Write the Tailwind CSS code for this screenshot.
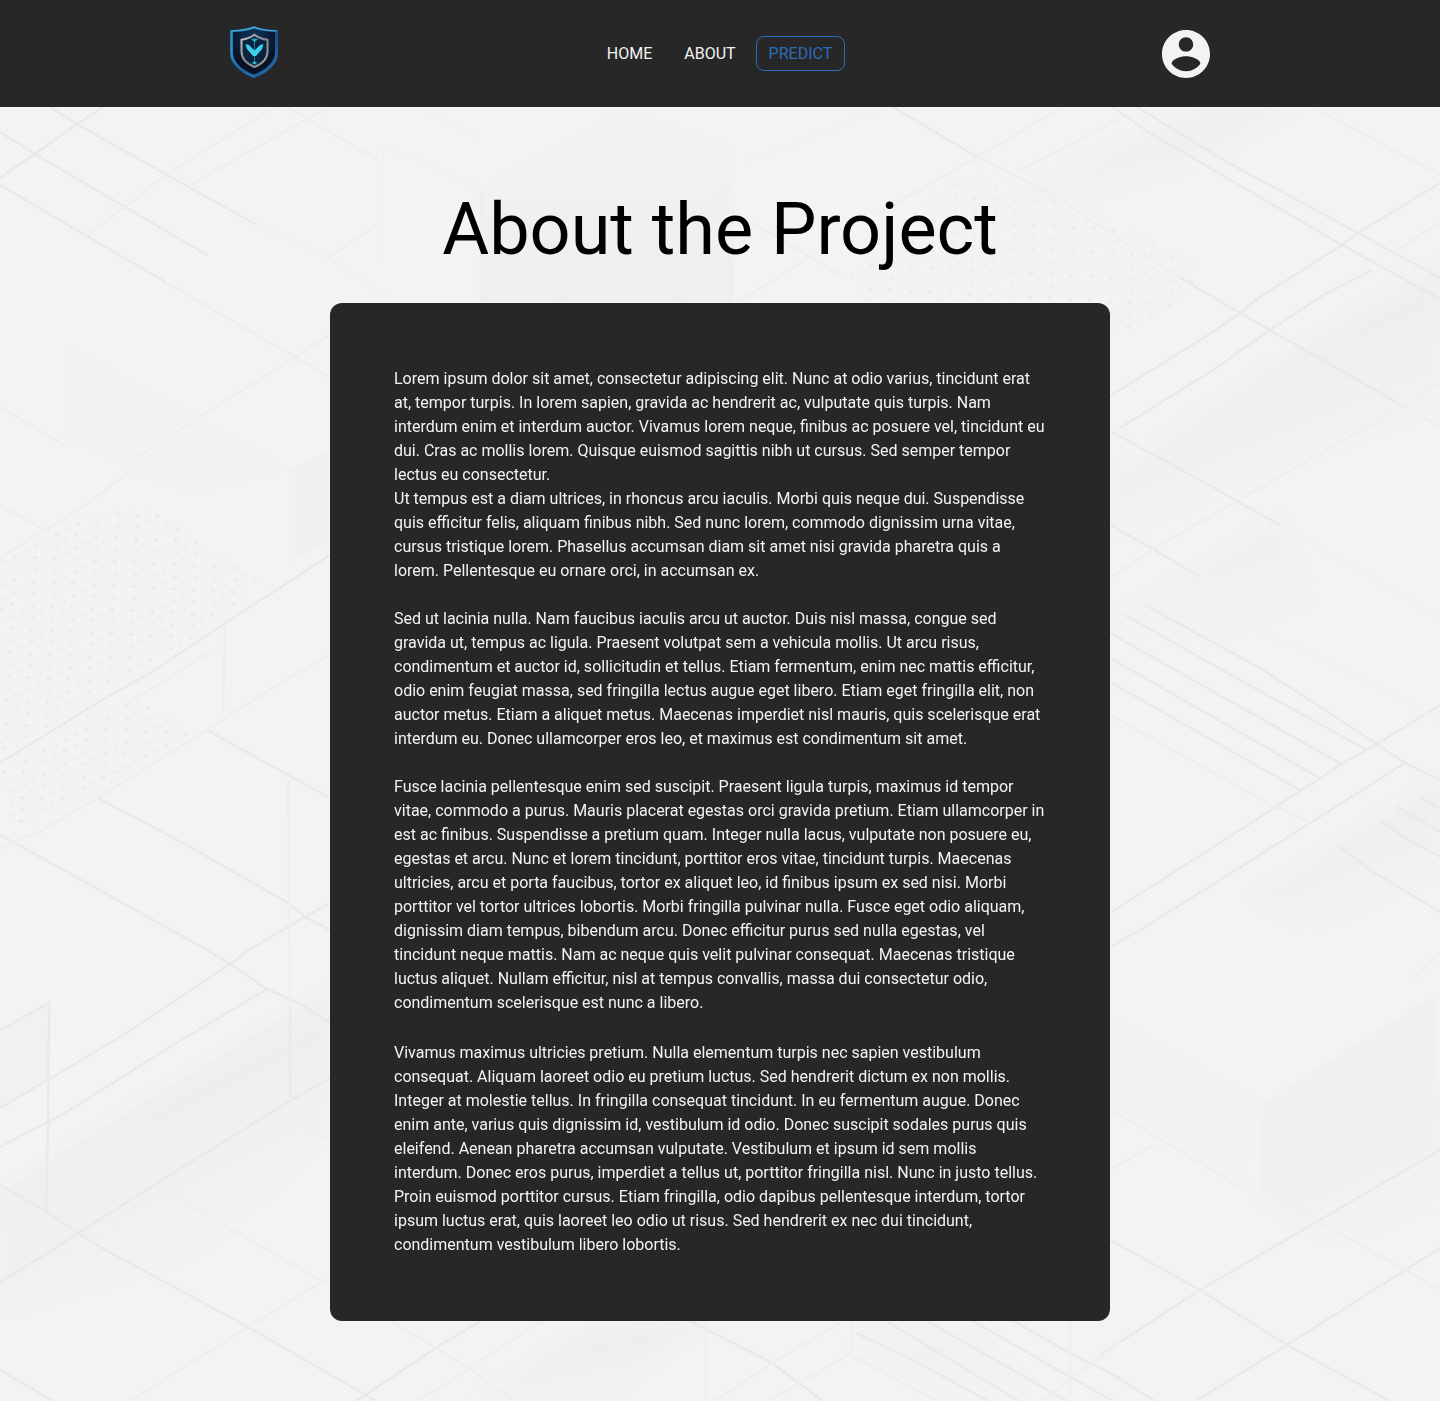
<!DOCTYPE html>
<html lang="en">
<head>
<meta charset="utf-8">
<meta name="viewport" content="width=device-width, initial-scale=1">
<title>About the Project</title>
<script src="https://cdn.jsdelivr.net/npm/@tailwindcss/browser@4"></script>
</head>
<body class="flex min-h-screen flex-col bg-[#f3f3f3] font-[Roboto,sans-serif] text-base">

<header class="bg-[#272727] px-6">
  <div class="mx-auto flex h-[107px] max-w-[980px] items-center justify-between">
    <a href="#" aria-label="Home" class="-mt-1 block">
      <svg class="block h-[52px] w-12" viewBox="0 0 48 52" fill="none" aria-hidden="true">
        <defs>
          <linearGradient id="rim" x1="0" y1="0" x2="1" y2="1">
            <stop offset="0" stop-color="#1b7ba6"/><stop offset=".25" stop-color="#2380b4"/><stop offset=".55" stop-color="#184c86"/><stop offset="1" stop-color="#2679c4"/>
          </linearGradient>
          <linearGradient id="steel" x1="0" y1="0" x2="1" y2="1">
            <stop offset="0" stop-color="#c6cace"/><stop offset=".5" stop-color="#82878d"/><stop offset="1" stop-color="#9ea2a6"/>
          </linearGradient>
          <radialGradient id="core" cx=".5" cy=".2" r=".6">
            <stop offset="0" stop-color="#0f3660"/><stop offset="1" stop-color="#081222"/>
          </radialGradient>
        </defs>
        <path d="M24 0c6 2.600 15 4 24 4v23c0 11-11 20.500-24 25C11 47.500 0 38 0 27V4c9 0 18-1.400 24-4Z" fill="url(#rim)"/>
        <path d="M24 2.800c7 2.200 14 3.200 21 3.400v20.500c0 9-9.500 17.500-21 21.800C12.500 44.200 3 35.700 3 26.700V6.200c7-.2 14-1.200 21-3.400Z" fill="url(#core)"/>
        <path d="M1 5C10 4.700 17.500 3.500 24 1.200c6.500 2.300 14 3.500 23 3.800" stroke="#4cb9df" stroke-width="1"/>
        <path d="M1.500 6v21C1.500 37 12 46 24 50.500" stroke="#3199cc" stroke-width=".8"/>
        <path d="M24.500 8.800c3.600 2.800 7.800 4.300 13 5v11.500c0 7-5.500 12.700-13 15.700-7.500-3-13-8.700-13-15.700V13.800c5.200-.7 9.400-2.200 13-5Z" fill="#0c2340" stroke="url(#steel)" stroke-width="2"/>
        <path d="M24.500 15v22" stroke="#1a7f9c"/>
        <path d="m15.500 18 3.500 1 5.500 5.500L30 19l3.500-1-1.500 5-6 7h-3l-6-7-1.500-5Z" fill="#39d3ee"/>
        <path d="M21 13.300c2-1 5-1 7 0l-3.500 3-3.500-3Z" fill="#1fa6c4"/>
        <path d="M22 37c.8-1.600 4.200-1.600 5 0l-2.500 1.600L22 37Z" fill="#2ab6cf"/>
      </svg>
    </a>
    <nav class="flex items-center gap-2 text-[#f3f3f3]">
      <a href="#" class="px-3">HOME</a>
      <a href="#" class="px-3">ABOUT</a>
      <a href="#" class="flex h-[35px] items-center rounded-lg border border-[#2a6cbd] px-3 text-[#2b6cb8]">PREDICT</a>
    </nav>
    <button type="button" aria-label="Account" class="block text-[#f3f3f3]">
      <svg class="block size-12" viewBox="2 2 20 20" fill="currentColor" aria-hidden="true">
        <path d="M12 2C6.480 2 2 6.480 2 12s4.480 10 10 10 10-4.480 10-10S17.520 2 12 2zm0 3c1.660 0 3 1.340 3 3s-1.340 3-3 3-3-1.340-3-3 1.340-3 3-3zm0 14.200c-2.500 0-4.710-1.280-6-3.220.030-1.990 4-3.080 6-3.080 1.990 0 5.970 1.090 6 3.080-1.290 1.940-3.500 3.220-6 3.220z"/>
      </svg>
    </button>
  </div>
</header>

<main class="relative flex-1 overflow-hidden px-6 pb-20">
  <!-- Faint isometric line art behind the content -->
  <svg class="absolute inset-0 h-full w-full" viewBox="0 107 1440 1294" preserveAspectRatio="xMidYMid slice" fill="none" aria-hidden="true">
    <defs>
      <pattern id="dots" width="20" height="24" patternUnits="userSpaceOnUse" patternTransform="rotate(3)">
        <ellipse cx="4" cy="3" rx="2.500" ry="1.400" transform="rotate(25 4 3)" fill="#e9e9ea"/>
        <ellipse cx="14" cy="9" rx="3" ry="1" transform="rotate(35 14 9)" fill="#ececed"/>
        <ellipse cx="5" cy="15" rx="2" ry="1.400" fill="#ebebec"/>
        <ellipse cx="15" cy="21" rx="3" ry="1" transform="rotate(30 15 21)" fill="#ececed"/>
      </pattern>
      <linearGradient id="fade" x1="0" y1="0" x2=".5" y2="1">
        <stop offset="0" stop-color="#efefef" stop-opacity=".3"/><stop offset=".5" stop-color="#eeeeee"/><stop offset="1" stop-color="#f0f0f0" stop-opacity="0"/>
      </linearGradient>
      <linearGradient id="wall" x1="0" y1="0" x2="0" y2="1">
        <stop offset="0" stop-color="#f2f2f2"/><stop offset="1" stop-color="#efefef"/>
      </linearGradient>
      <filter id="soft"><feGaussianBlur stdDeviation="6"/></filter>
      <filter id="edge"><feGaussianBlur stdDeviation="0.7"/></filter>
    </defs>
    <g fill="url(#fade)" filter="url(#soft)">
      <path d="M1440 265 1300 350 1110 478V530L1260 470 1440 400Z"/>
      <path d="M1200 107h90l-100 55-150 45-10-15Z" opacity=".7"/>
      <path d="M1120 618 1280 520 1310 600 1200 640Z" opacity=".6"/>
      <path d="M1440 782 1255 898 1310 925 1440 870Z"/>
      <path d="M330 992 47 1165 0 1200V1310L190 1250 330 1130Z"/>
      <path d="M598 1321 480 1401H600L700 1321Z"/>
      <path d="M1260 1195 1437 1082 1440 1230 1330 1240Z"/>
      <path d="M853 1321H930L1060 1401H960L853 1340Z" opacity=".5"/>
    </g>
    <g fill="#f0f0f0">
      <path d="M481 188 627 110 734 145V302H481Z" fill="url(#wall)"/>
      <path d="M290 470 330 450V540L290 562Z"/>
      <path d="M1263 1103 1435 995 1437 1082 1260 1195Z"/>
      <path d="M0 1030 49 1003V1080L0 1108Z" fill="#f1f1f1"/>
      <path d="M1110 1017 1263 1103 1240 1188 1110 1110Z" fill="#f2f2f2"/>
      <path d="M67 347 200 420 290 470 190 495 67 440Z" fill="#f2f2f2"/>
    </g>
    <g fill="url(#dots)" filter="url(#edge)">
      <path d="M0 560 60 522 150 505 262 580 225 618 97 698 0 755Z"/>
      <path d="M0 772 100 708 150 698 190 735 98 793 15 832Z"/>
      <path d="M960 172 1040 190 1200 260 1190 300 1115 335 1090 302H860L850 275Z" opacity=".8"/>
    </g>
    <g stroke="#e9e9ea" stroke-width="2.500" filter="url(#edge)">
      <path d="M50 107 77 124 167 175 257 225M0 132 35 154 125 207 207 255M0 185 167 283M103 107 77 124 35 154 0 178"/>
      <path d="M977 157 893 107M1112 107 1150 133 1342 245 1440 299M1137 107 1227 162 1358 233 1440 278"/>
      <path d="M1440 183 1358 233 1342 245 1260 297 1240 313 1213 332 1110 396M1180 278 1240 313 1403 406"/>
      <path d="M1372 270 1320 297 1270 330 1213 370 1120 428M1112 432 1200 480 1237 501 1280 525"/>
      <path d="M1110 525 1153 549 1200 577M1145 605 1260 668 1377 744M1125 615 1240 680 1367 750M1110 633 1343 765M1110 658 1318 777M1110 682 1180 722 1300 790"/>
      <path d="M1440 705 1377 744 1340 765 1240 830 1110 913M1405 763 1310 823 1220 880 1140 930 1110 947M1377 744 1405 763 1440 780"/>
      <path d="M1420 797 1440 809M1397 807 1440 832M1380 820 1400 835 1440 857M1340 847 1370 870 1440 912"/>
      <path d="M330 555 227 622 150 673 97 703 0 763M207 730 330 798M0 835 15 843 207 950 230 964 267 989 303 1005 330 1023"/>
      <path d="M98 798 183 843 288 903 305 917 330 930M330 903 305 917 252 948 230 964 128 1032 48 1080 0 1108"/>
      <path d="M267 989 173 1045 70 1110 48 1122 0 1147M0 1030 49 1003 48 1122 46 1212M0 1185 47 1212 78 1233 100 1247 248 1327 376 1401"/>
      <path d="M330 1078 288 1102 183 1167 78 1233 48 1253 0 1282M0 1370 53 1401M290 1006V1098"/>
      <path d="M1110 1240 1200 1290 1287 1345 1390 1401M1440 1150 1318 1221 1200 1290 1100 1355M1440 1248 1287 1345 1197 1400M1100 1367 1155 1401"/>
      <path d="M481 1321 437 1347 356 1401M690 1321 772 1363 823 1401M856 1333 907 1357 988 1401M886 1321 1019 1401M927 1321 1067 1401M973 1321 1070 1377 1113 1401M1014 1321 1073 1355 1120 1378"/>
    </g>
    <g stroke="#eeeeef" stroke-width="2.500" filter="url(#edge)">
      <path d="M275 107 165 175 125 207 90 232M287 107 378 160M323 110 190 185M380 223 327 258M167 283 295 357 330 377M330 335 195 420 133 460M0 407 67 447M133 468 93 500 0 558M0 505 43 529"/>
      <path d="M1063 107 977 157 879 213M977 157 1020 178 1050 193 1137 250 1180 278M1117 120 1017 172M810 257 738 302M753 223 841 275M734 187 623 258 554 302M623 258 684 302M481 188V302"/>
      <path d="M1313 107 1440 175M1440 222 1397 250M1403 406 1440 427M1440 383 1403 406 1237 501 1153 549 1110 578M1110 715 1273 806 1310 823"/>
      <path d="M225 623 223 713M330 655 288 678 207 730 98 798 37 833 0 848M288 780 290 1006M210 652 125 705M157 1186 320 1280M325 1280 248 1327 130 1401M288 1017 47 1165 0 1197M290 1118 330 1140"/>
      <path d="M1270 1195 1318 1221 1407 1271 1440 1290M1110 1170 1153 1145M1110 1110 1243 1188M1440 953 1415 977"/>
      <path d="M391 1321 470 1369 514 1401M542 1321 478 1362M470 1369 417 1401M706 1321V1401M840 1323 772 1363 715 1401M853 1321 851 1353 769 1401M851 1355 937 1401M1070 1321V1401M1120 1342 1042 1401"/>
    </g>
    <g stroke="#f1f1f1" stroke-width="2">
      <path d="M257 225 327 258 397 302M481 188 627 110M67 347 290 470M420 107 480 138M383 145 481 188M383 145V260M1280 525 1440 618M1160 590 1340 666 1440 720M1110 1017 1263 1103 1435 995 1437 1082 1260 1195 1261 1103M290 470V562M750 160 890 107"/>
    </g>
  </svg>

  <div class="relative mx-auto max-w-[780px]">
    <h1 class="pt-[81px] pb-[31px] text-center text-7xl leading-[84px] text-black">About the Project</h1>
    <article class="rounded-xl bg-[#272727] p-16 leading-6 text-[#f3f3f3]">
      <p>Lorem ipsum dolor sit amet, consectetur adipiscing elit. Nunc at odio varius, tincidunt erat at, tempor turpis. In lorem sapien, gravida ac hendrerit ac, vulputate quis turpis. Nam interdum enim et interdum auctor. Vivamus lorem neque, finibus ac posuere vel, tincidunt eu dui. Cras ac mollis lorem. Quisque euismod sagittis nibh ut cursus. Sed semper tempor lectus eu consectetur.</p>
      <p>Ut tempus est a diam ultrices, in rhoncus arcu iaculis. Morbi quis neque dui. Suspendisse quis efficitur felis, aliquam finibus nibh. Sed nunc lorem, commodo dignissim urna vitae, cursus tristique lorem. Phasellus accumsan diam sit amet nisi gravida pharetra quis a lorem. Pellentesque eu ornare orci, in accumsan ex.</p>
      <p class="mt-6">Sed ut lacinia nulla. Nam faucibus iaculis arcu ut auctor. Duis nisl massa, congue sed gravida ut, tempus ac ligula. Praesent volutpat sem a vehicula mollis. Ut arcu risus, condimentum et auctor id, sollicitudin et tellus. Etiam fermentum, enim nec mattis efficitur, odio enim feugiat massa, sed fringilla lectus augue eget libero. Etiam eget fringilla elit, non auctor metus. Etiam a aliquet metus. Maecenas imperdiet nisl mauris, quis scelerisque erat interdum eu. Donec ullamcorper eros leo, et maximus est condimentum sit amet.</p>
      <p class="mt-6">Fusce lacinia pellentesque enim sed suscipit. Praesent ligula turpis, maximus id tempor vitae, commodo a purus. Mauris placerat egestas orci gravida pretium. Etiam ullamcorper in est ac finibus. Suspendisse a pretium quam. Integer nulla lacus, vulputate non posuere eu, egestas et arcu. Nunc et lorem tincidunt, porttitor eros vitae, tincidunt turpis. Maecenas ultricies, arcu et porta faucibus, tortor ex aliquet leo, id finibus ipsum ex sed nisi. Morbi porttitor vel tortor ultrices lobortis. Morbi fringilla pulvinar nulla. Fusce eget odio aliquam, dignissim diam tempus, bibendum arcu. Donec efficitur purus sed nulla egestas, vel tincidunt neque mattis. Nam ac neque quis velit pulvinar consequat. Maecenas tristique luctus aliquet. Nullam efficitur, nisl at tempus convallis, massa dui consectetur odio, condimentum scelerisque est nunc a libero.</p>
      <p class="mt-[26px]">Vivamus maximus ultricies pretium. Nulla elementum turpis nec sapien vestibulum consequat. Aliquam laoreet odio eu pretium luctus. Sed hendrerit dictum ex non mollis. Integer at molestie tellus. In fringilla consequat tincidunt. In eu fermentum augue. Donec enim ante, varius quis dignissim id, vestibulum id odio. Donec suscipit sodales purus quis eleifend. Aenean pharetra accumsan vulputate. Vestibulum et ipsum id sem mollis interdum. Donec eros purus, imperdiet a tellus ut, porttitor fringilla nisl. Nunc in justo tellus. Proin euismod porttitor cursus. Etiam fringilla, odio dapibus pellentesque interdum, tortor ipsum luctus erat, quis laoreet leo odio ut risus. Sed hendrerit ex nec dui tincidunt, condimentum vestibulum libero lobortis.</p>
    </article>
  </div>
</main>
</body>
</html>
